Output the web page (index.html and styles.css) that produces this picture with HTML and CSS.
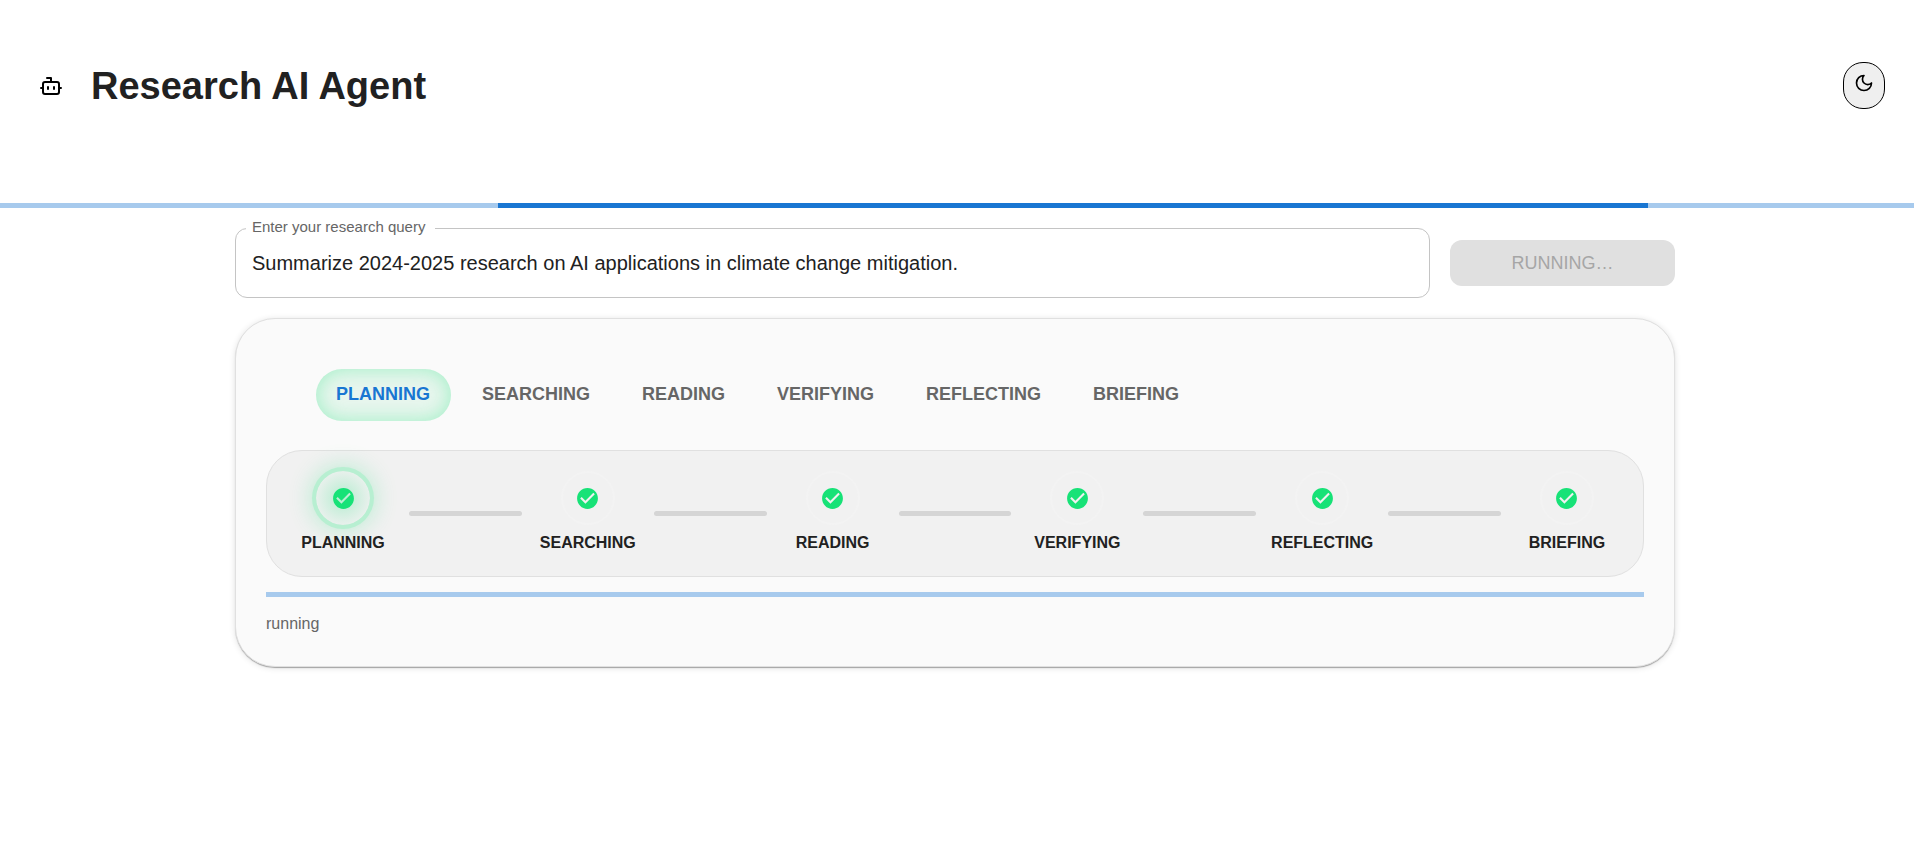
FILE: index.html
```html
<!DOCTYPE html>
<html lang="en">
<head>
  <meta charset="utf-8">
  <meta name="viewport" content="width=device-width, initial-scale=1">
  <title>Research AI Agent</title>
  <link rel="stylesheet" href="styles.css">
</head>
<body>
  <svg class="sprite" aria-hidden="true">
    <symbol id="check" viewBox="0 0 24 24">
      <path d="M12 2C6.48 2 2 6.48 2 12s4.48 10 10 10 10-4.48 10-10S17.52 2 12 2zm-2 15-5-5 1.41-1.41L10 14.17l7.59-7.59L19 8l-9 9z"/>
    </symbol>
  </svg>

  <header class="header">
    <svg class="header-icon" viewBox="0 0 24 24" aria-hidden="true">
      <path d="M12 8V4H8"/>
      <rect width="16" height="12" x="4" y="8" rx="2"/>
      <path d="M2 14h2M20 14h2M15 13v2M9 13v2"/>
    </svg>
    <h1 class="title">Research AI Agent</h1>
    <button class="theme-toggle" type="button" aria-label="Switch to dark theme">
      <svg class="moon" viewBox="0 0 24 24" aria-hidden="true">
        <path d="M12 3a6 6 0 0 0 9 9 9 9 0 1 1-9-9Z"/>
      </svg>
    </button>
  </header>

  <div class="progress" role="progressbar" aria-label="Loading">
    <div class="progress-bar"></div>
  </div>

  <main class="main">
    <div class="container">
      <form class="query-form">
        <div class="field">
          <label class="field-label" for="query">Enter your research query</label>
          <input class="field-input" id="query" type="text" value="Summarize 2024-2025 research on AI applications in climate change mitigation.">
        </div>
        <button class="run" type="submit" disabled>RUNNING…</button>
      </form>

      <section class="card">
        <nav class="tabs">
          <button class="tab tab-active" type="button">PLANNING</button>
          <button class="tab" type="button">SEARCHING</button>
          <button class="tab" type="button">READING</button>
          <button class="tab" type="button">VERIFYING</button>
          <button class="tab" type="button">REFLECTING</button>
          <button class="tab" type="button">BRIEFING</button>
        </nav>

        <div class="stepper">
          <div class="step step-active">
            <span class="ring"><svg class="check"><use href="#check"/></svg></span>
            <span class="step-label">PLANNING</span>
          </div>
          <div class="connector"></div>
          <div class="step">
            <span class="ring"><svg class="check"><use href="#check"/></svg></span>
            <span class="step-label">SEARCHING</span>
          </div>
          <div class="connector"></div>
          <div class="step">
            <span class="ring"><svg class="check"><use href="#check"/></svg></span>
            <span class="step-label">READING</span>
          </div>
          <div class="connector"></div>
          <div class="step">
            <span class="ring"><svg class="check"><use href="#check"/></svg></span>
            <span class="step-label">VERIFYING</span>
          </div>
          <div class="connector"></div>
          <div class="step">
            <span class="ring"><svg class="check"><use href="#check"/></svg></span>
            <span class="step-label">REFLECTING</span>
          </div>
          <div class="connector"></div>
          <div class="step">
            <span class="ring"><svg class="check"><use href="#check"/></svg></span>
            <span class="step-label">BRIEFING</span>
          </div>
        </div>

        <div class="progress" role="progressbar" aria-label="Research progress"></div>
        <p class="status">running</p>
      </section>
    </div>
  </main>
</body>
</html>
```

FILE: styles.css
```css
* {
  box-sizing: border-box;
}

body {
  margin: 0;
  background: #fff;
  color: #212121;
  font-family: "Liberation Sans", Arial, sans-serif;
  font-size: 16px;
}

button,
input {
  font-family: inherit;
}

.sprite {
  display: none;
}

.header {
  display: flex;
  align-items: center;
  padding: 62px 29px 94px 39px;
}

.header-icon,
.moon {
  fill: none;
  stroke: #000;
  stroke-width: 2;
  stroke-linecap: round;
  stroke-linejoin: round;
}

.header-icon {
  width: 24px;
  height: 24px;
}

.title {
  margin: 0 auto 0 28px;
  font-size: 38px;
  line-height: 46px;
  font-weight: 700;
}

.theme-toggle {
  padding: 10px;
  border: 1px solid #000;
  border-radius: 20px;
  background: #efefef;
  font-size: 16px;
  line-height: 20px;
}

.moon {
  width: 20px;
  height: 20px;
}

.progress {
  height: 5px;
  overflow: hidden;
  background: #a7caed;
}

.progress-bar {
  width: 60.1%;
  height: 100%;
  margin-left: 26%;
  background: #1976d2;
}

.main {
  padding: 20px 24px 40px 20px;
}

.container {
  max-width: 1440px;
  margin: 0 auto;
}

.query-form {
  display: flex;
  align-items: center;
  gap: 20px;
}

.field {
  position: relative;
  flex: 1;
}

.field-label {
  position: absolute;
  top: -10px;
  left: 11px;
  padding: 0 10px 0 6px;
  background: #fff;
  color: #666;
  font-size: 15px;
  line-height: 18px;
}

.field-input {
  display: block;
  width: 100%;
  height: 70px;
  padding: 0 16px;
  border: 1px solid #c4c4c4;
  border-radius: 12px;
  background: transparent;
  color: #212121;
  font-size: 20px;
}

.run {
  width: 225px;
  height: 46px;
  border: 0;
  border-radius: 12px;
  background: #e0e0e0;
  color: #a6a6a6;
  font-size: 18px;
}

.card {
  margin-top: 20px;
  padding: 50px 30px 30px;
  border: 1px solid #e0e0e0;
  border-radius: 40px;
  background: #fafafa;
  box-shadow: 0 2px 1px -1px rgba(0, 0, 0, 0.2), 0 1px 1px rgba(0, 0, 0, 0.14), 0 1px 6px rgba(0, 0, 0, 0.12);
}

.tabs {
  display: flex;
  flex-wrap: wrap;
  gap: 11px;
  padding: 0 50px;
}

.tab {
  height: 52px;
  padding: 0 21px 2px 20px;
  border: 0;
  border-radius: 26px;
  background: transparent;
  color: #666;
  font-size: 18px;
  font-weight: 700;
}

.tab-active {
  background: #e8f6ee;
  box-shadow: inset 0 0 20px rgba(23, 226, 119, 0.35);
  color: #1976d2;
}

.stepper {
  display: flex;
  align-items: center;
  gap: 10px;
  margin: 29px 0 15px;
  padding: 20px;
  border: 1px solid #e0e0e0;
  border-radius: 36px;
  background: #f1f1f1;
}

.step {
  display: flex;
  flex-direction: column;
  align-items: center;
  gap: 6px;
  width: 112px;
  padding-bottom: 2px;
}

.ring {
  display: grid;
  place-items: center;
  width: 54px;
  height: 54px;
  border: 2px solid #f3f3f3;
  border-radius: 50%;
}

.step-active .ring {
  border: 0;
  background: radial-gradient(closest-side, rgba(23, 226, 119, 0.28), rgba(23, 226, 119, 0.04));
  box-shadow: 0 0 0 4px #b7efd1, 0 0 24px 3px rgba(23, 226, 119, 0.3);
}

.check {
  width: 25px;
  height: 25px;
  fill: #17e277;
}

.step-label {
  font-size: 16px;
  line-height: 23px;
  font-weight: 700;
}

.connector {
  flex: 1;
  height: 5px;
  border-radius: 3px;
  background: #d5d5d5;
}

.status {
  margin: 14px 0 0;
  color: #666;
  font-size: 16px;
  line-height: 25px;
}
```
